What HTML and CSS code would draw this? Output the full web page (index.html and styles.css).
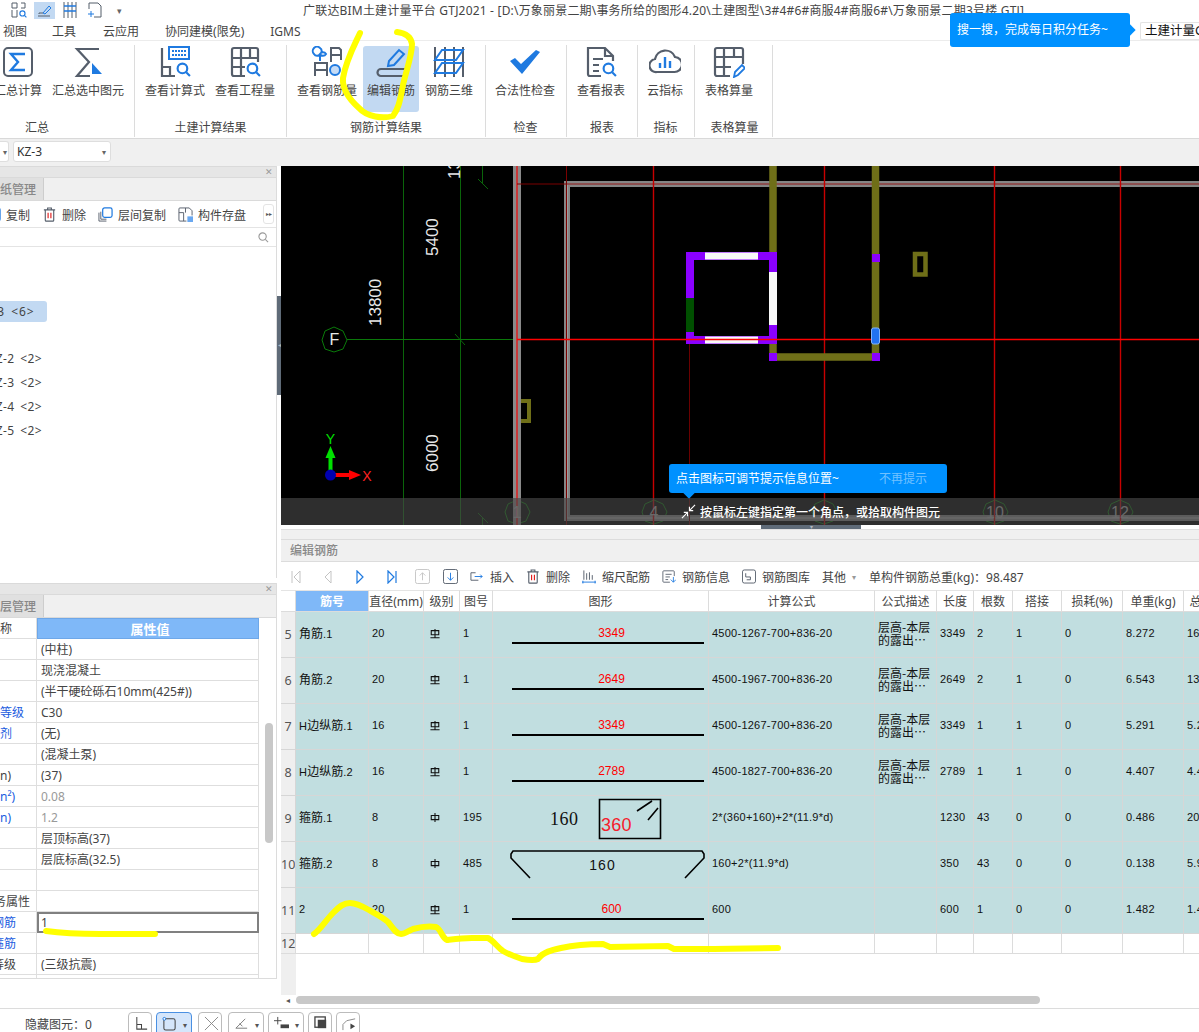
FILE: index.html
```html
<!DOCTYPE html>
<html lang="zh-CN">

<head>
    <meta charset="UTF-8">
    <title>广联达BIM土建计量平台 GTJ2021</title>
    <link rel="stylesheet" href="styles.css">
</head>

<body>
    <svg class="defs" width="0" height="0">
        <symbol id="grade-a" viewBox="0 0 12 12"><path d="M1.5 3.5h9v5h-9zM6 .5v11" fill="none" stroke="#111" stroke-width="1.3"/></symbol>
        <symbol id="grade-c" viewBox="0 0 12 12"><path d="M1.5 2.5h9v5h-9zM6 .5v10M.5 11h11" fill="none" stroke="#111" stroke-width="1.3"/></symbol>
        <symbol id="lens" viewBox="0 0 14 14"><circle cx="6" cy="6" r="4.5" fill="none" stroke="#1f7ae0" stroke-width="2"/><path d="M9.5 9.5l3.5 3.5" stroke="#1f7ae0" stroke-width="2"/></symbol>
        <symbol id="trash" viewBox="0 0 14 16"><path d="M1 3h12M5 3V1h4v2M2.5 3v11a1 1 0 0 0 1 1h7a1 1 0 0 0 1-1V3" fill="none" stroke="#555e6b" stroke-width="1.2"/><path d="M5.5 6v6M8.5 6v6" stroke="#e01818" stroke-width="1.2"/></symbol>
    </svg>

    <div class="titlebar">
        <div class="quick">
            <svg class="quick-icon q1" viewBox="0 0 16 16"><path d="M1 1h5v5H1zM1 8v7h5V8M10 1h4v5h-4" fill="none" stroke="#555e6b"/><use href="#lens" x="8" y="8" width="8" height="8"/></svg>
            <span class="quick-on"><svg class="quick-icon" viewBox="0 0 16 16"><path d="M1 14h12M2 12v-1h4" fill="none" stroke="#555e6b"/><path d="M6 11l6-7 2 2-6 6z" fill="none" stroke="#1f7ae0"/></svg></span>
            <svg class="quick-icon" viewBox="0 0 16 16"><path d="M2 0v16M14 0v16M6 0v16M10 0v16" stroke="#555e6b"/><path d="M2 4h12M2 9h12" stroke="#1f7ae0" stroke-width="1.4"/></svg>
            <svg class="quick-icon" viewBox="0 0 16 16"><path d="M2 7V1h9l3 3v11H7" fill="none" stroke="#555e6b"/><path d="M4 9v6M1 12h6" stroke="#1f7ae0"/></svg>
            <span class="quick-more">▾</span>
        </div>
        <div class="title">广联达BIM土建计量平台 GTJ2021 - [D:\万象丽景二期\事务所给的图形4.20\土建图型\3#4#6#商服4#商服6#\万象丽景二期3号楼.GTJ]</div>
    </div>

    <div class="menubar">
        <a class="m1">视图</a>
        <a class="m2">工具</a>
        <a class="m3">云应用</a>
        <a class="m4">协同建模(限免)</a>
        <a class="m5">IGMS</a>
        <div class="search-box">土建计量G</div>
    </div>

    <div class="ribbon">
        <div class="group g1">
            <div class="group-btns">
                <div class="rbtn">
                    <svg class="ricon" viewBox="0 0 32 32"><rect x="2" y="2" width="28" height="28" rx="4" fill="none" stroke="#555e6b" stroke-width="2"/><path d="M23 8H9l7 8-7 8h14" fill="none" stroke="#1f7ae0" stroke-width="2.4"/></svg>
                    <span>汇总计算</span>
                </div>
                <div class="rbtn">
                    <svg class="ricon" viewBox="0 0 32 32"><path d="M27 3H5l12 13L5 30h13" fill="none" stroke="#555e6b" stroke-width="2.2"/><path d="M20 17l10 11h-10z" fill="#1f7ae0"/></svg>
                    <span>汇总选中图元</span>
                </div>
            </div>
            <div class="group-name">汇总</div>
        </div>
        <div class="group g2">
            <div class="group-btns">
                <div class="rbtn">
                    <svg class="ricon" viewBox="0 0 32 32"><path d="M3 2v28h13M3 21h8v9" fill="none" stroke="#555e6b" stroke-width="2.2"/><path d="M10 1h20v12H10z" fill="none" stroke="#1f7ae0" stroke-width="2"/><path d="M13 5h14M13 9h14" stroke="#1f7ae0" stroke-width="2" stroke-dasharray="2 1"/><use href="#lens" x="17" y="16" width="15" height="15"/></svg>
                    <span>查看计算式</span>
                </div>
                <div class="rbtn">
                    <svg class="ricon" viewBox="0 0 32 32"><path d="M16 30H5a2 2 0 0 1-2-2V4a2 2 0 0 1 2-2h22a2 2 0 0 1 2 2v12M3 12h26M3 21h13M12 2v28M21 2v10" fill="none" stroke="#555e6b" stroke-width="2.2"/><use href="#lens" x="17" y="16" width="15" height="15"/></svg>
                    <span>查看工程量</span>
                </div>
            </div>
            <div class="group-name">土建计算结果</div>
        </div>
        <div class="group g3">
            <div class="group-btns">
                <div class="rbtn">
                    <svg class="ricon" viewBox="0 0 32 32"><path d="M4 30V17h12v13M4 24h12M20 16V2h8l2 2v10M20 9h10" fill="none" stroke="#555e6b" stroke-width="2"/><path d="M9 2a3.500 3.500 0 0 1 0 6 3.500 3.500 0 0 1-6 0 3.500 3.500 0 0 1 6-6zM9 8a3.500 3.500 0 0 1 6 0 3.500 3.500 0 0 1-6 0zM9 8v7" fill="none" stroke="#1f7ae0" stroke-width="2"/><circle cx="24" cy="24" r="5" fill="#c6dcf6" stroke="#1f7ae0" stroke-width="2"/></svg>
                    <span>查看钢筋量</span>
                </div>
                <div class="rbtn rbtn-on">
                    <svg class="ricon" viewBox="0 0 32 32"><path d="M30 23H6a3.500 3.500 0 0 0 0 7h22" fill="none" stroke="#555e6b" stroke-width="2.200"/><path d="M13 20l1-5L24 4l5 4-10 11z" fill="none" stroke="#1f7ae0" stroke-width="2"/></svg>
                    <span>编辑钢筋</span>
                </div>
                <div class="rbtn">
                    <svg class="ricon" viewBox="0 0 32 32"><path d="M2 1v30M12 1v30M21 1v30M30 1v30" stroke="#555e6b" stroke-width="2"/><path d="M9 4h21l-7 10H2zM9 17h21l-7 10H2z" fill="none" stroke="#1f7ae0" stroke-width="2"/></svg>
                    <span>钢筋三维</span>
                </div>
            </div>
            <div class="group-name">钢筋计算结果</div>
        </div>
        <div class="group g4">
            <div class="group-btns">
                <div class="rbtn">
                    <svg class="ricon" viewBox="0 0 32 32"><path d="M1 15l5-3 6 6L27 4l4 2-18 22z" fill="#1f7ae0"/></svg>
                    <span>合法性检查</span>
                </div>
            </div>
            <div class="group-name">检查</div>
        </div>
        <div class="group g5">
            <div class="group-btns">
                <div class="rbtn">
                    <svg class="ricon" viewBox="0 0 32 32"><path d="M16 30H5a2 2 0 0 1-2-2V2h17l8 8v5M20 2v8h8M8 13h10M8 19h6M8 25h6" fill="none" stroke="#555e6b" stroke-width="2.200"/><use href="#lens" x="17" y="16" width="15" height="15"/></svg>
                    <span>查看报表</span>
                </div>
            </div>
            <div class="group-name">报表</div>
        </div>
        <div class="group g6">
            <div class="group-btns">
                <div class="rbtn">
                    <svg class="ricon" viewBox="0 0 32 32"><path d="M8 26a6.500 6.500 0 0 1-2-13A10.500 10.500 0 0 1 26 11a7.500 7.500 0 0 1-1 15z" fill="none" stroke="#555e6b" stroke-width="2.200"/><path d="M11 17v5M16 11v11M21 15v7" stroke="#1f7ae0" stroke-width="2.400"/></svg>
                    <span>云指标</span>
                </div>
            </div>
            <div class="group-name">指标</div>
        </div>
        <div class="group g7">
            <div class="group-btns">
                <div class="rbtn">
                    <svg class="ricon" viewBox="0 0 32 32"><path d="M17 30H4a2 2 0 0 1-2-2V4a2 2 0 0 1 2-2h24a2 2 0 0 1 2 2v14M2 11h28M2 21h16M11 2v28M21 2v9" fill="none" stroke="#555e6b" stroke-width="2.200"/><path d="M21 31l1-5 7-7 3 3-7 7z" fill="none" stroke="#1f7ae0" stroke-width="1.800"/></svg>
                    <span>表格算量</span>
                </div>
            </div>
            <div class="group-name">表格算量</div>
        </div>
    </div>

    <div class="combobar">
        <div class="combo combo-cut"><i>▾</i></div>
        <div class="combo combo-kz">KZ-3<i>▾</i></div>
    </div>

    <div class="workspace">
        <div class="leftcol">
            <div class="panel panel-top">
                <div class="panel-head"><span class="close">✕</span></div>
                <div class="panel-tabs"><span class="tab">图纸管理</span></div>
                <div class="mini-toolbar">
                    <span class="mini mini-copy"><svg class="mini-icon" viewBox="0 0 14 14"><rect x="1" y="1" width="12" height="12" rx="2" fill="none" stroke="#1f7ae0" stroke-width="1.400"/></svg>复制</span>
                    <span class="mini"><svg class="mini-icon" viewBox="0 0 14 16"><use href="#trash"/></svg>删除</span>
                    <span class="mini"><svg class="mini-icon" viewBox="0 0 16 16"><path d="M1 6v9h8M3 5v8h6" fill="none" stroke="#555e6b"/><rect x="5" y="1" width="10" height="10" rx="2" fill="#fff" stroke="#1f7ae0" stroke-width="1.300"/></svg>层间复制</span>
                    <span class="mini"><svg class="mini-icon" viewBox="0 0 16 16"><path d="M9 15H2a1 1 0 0 1-1-1V2a1 1 0 0 1 1-1h10l3 3v5M1 6h5v9M8 1v5" fill="none" stroke="#555e6b"/><rect x="10" y="10" width="6" height="6" fill="#6aa8f0"/></svg>构件存盘</span>
                    <span class="mini-more">▸▸</span>
                </div>
                <div class="search-row"><svg class="search-icon" viewBox="0 0 12 12"><circle cx="5" cy="5" r="4" fill="none" stroke="#999" stroke-width="1.200"/><path d="M8 8l3 3" stroke="#999" stroke-width="1.200"/></svg></div>
                <div class="tree">
                    <div class="tree-item tree-on"><span>KZ-3 &lt;6&gt;</span></div>
                    <div class="tree-item tree-first"><span>KZ-2 &lt;2&gt;</span></div>
                    <div class="tree-item"><span>KZ-3 &lt;2&gt;</span></div>
                    <div class="tree-item"><span>KZ-4 &lt;2&gt;</span></div>
                    <div class="tree-item"><span>KZ-5 &lt;2&gt;</span></div>
                </div>
            </div>

            <div class="panel panel-bottom">
                <div class="panel-head"><span class="close">✕</span></div>
                <div class="panel-tabs"><span class="tab">楼层管理</span></div>
                <div class="prop-body">
                    <table class="prop-table">
                        <tr class="prop-head"><td class="prop-name">称</td><th>属性值</th></tr>
                        <tr><td class="prop-name"></td><td>(中柱)</td></tr>
                        <tr><td class="prop-name"></td><td>现浇混凝土</td></tr>
                        <tr><td class="prop-name"></td><td>(半干硬砼砾石10mm(425#))</td></tr>
                        <tr><td class="prop-name blue">等级</td><td>C30</td></tr>
                        <tr><td class="prop-name blue">剂</td><td>(无)</td></tr>
                        <tr><td class="prop-name"></td><td>(混凝土泵)</td></tr>
                        <tr><td class="prop-name">n)</td><td>(37)</td></tr>
                        <tr><td class="prop-name blue">n²)</td><td class="gray">0.08</td></tr>
                        <tr><td class="prop-name blue">n)</td><td class="gray">1.2</td></tr>
                        <tr><td class="prop-name"></td><td>层顶标高(37)</td></tr>
                        <tr><td class="prop-name"></td><td>层底标高(32.5)</td></tr>
                        <tr><td class="prop-name"></td><td></td></tr>
                        <tr><td class="prop-name"><span class="cut cut-wide">业务属性</span></td><td></td></tr>
                        <tr><td class="prop-name blue"><span class="cut">钢筋</span></td><td class="prop-sel">1</td></tr>
                        <tr><td class="prop-name blue"><span class="cut">箍筋</span></td><td></td></tr>
                        <tr><td class="prop-name"><span class="cut">等级</span></td><td>(三级抗震)</td></tr>
                        <tr><td class="prop-name"></td><td></td></tr>
                    </table>
                    <div class="prop-scroll"><div class="prop-thumb"></div></div>
                </div>
            </div>
        </div>

        <div class="splitter"><div class="split-handle">◂</div></div>

        <div class="rightcol">
            <div class="canvas">
                <svg class="cad" width="918" height="359" viewBox="281 166 918 359">
                    <!-- axis lines -->
                    <path d="M403.500 166V525M460.500 166V525" stroke="#0a640a"/>
                    <path d="M347 339.500H517" stroke="#0a780a"/>
                    <path d="M455 334l10 11M478 179l10 10M482.500 166v17M478 513l10 10M482.500 518v7" stroke="#0a640a" fill="none"/>
                    <g fill="none" stroke="#0a7a0a">
                        <polygon points="334,327 343,331 347,340 343,349 334,352 325,349 322,340 325,331"/>
                        <polygon points="517,500 526,504 530,512 526,521 517,524 508,521 505,512 508,504"/>
                        <polygon points="654,500 663,504 667,512 663,521 654,524 645,521 642,512 645,504"/>
                        <polygon points="824,500 833,504 837,512 833,521 824,524 815,521 812,512 815,504"/>
                        <polygon points="995,500 1004,504 1008,512 1004,521 995,524 986,521 983,512 986,504"/>
                        <polygon points="1120,500 1129,504 1133,512 1129,521 1120,524 1111,521 1108,512 1111,504"/>
                    </g>
                    <!-- walls -->
                    <rect x="513" y="166" width="8" height="359" fill="#8a8a8a"/>
                    <path d="M517 166V525" stroke="#c83838" stroke-width="2"/>
                    <rect x="567" y="184" width="700" height="334" fill="none" stroke="#858585" stroke-width="6"/>
                    <rect x="567" y="184" width="700" height="334" fill="none" stroke="#b5b5b5"/>
                    <path d="M517 184H1199M566.500 166V525" stroke="#7a0000"/>
                    <!-- red grid -->
                    <path d="M653.500 166V525M824.500 166V525M994.500 166V525M1120.500 166V525" stroke="#c80000" stroke-width="1.400"/>
                    <path d="M689.500 343V525" stroke="#6a0000"/>
                    <!-- olive beams -->
                    <path d="M773 166V357H875.500V166" fill="none" stroke="#6f6f18" stroke-width="7.500"/>
                    <path d="M521 401h8v20h-8" fill="none" stroke="#6f6f18" stroke-width="4"/>
                    <rect x="915" y="254" width="10.500" height="20.500" fill="none" stroke="#6f6f18" stroke-width="4.500"/>
                    <rect x="769" y="353" width="8" height="8" fill="#8a00ff"/>
                    <rect x="872" y="353" width="8" height="8" fill="#8a00ff"/>
                    <rect x="872" y="254" width="8" height="8" fill="#8a00ff"/>
                    <!-- column -->
                    <g fill="#8a00ff">
                        <rect x="686" y="252" width="91" height="8"/>
                        <rect x="686" y="336" width="91" height="8"/>
                        <rect x="686" y="252" width="8" height="92"/>
                        <rect x="769" y="252" width="8" height="92"/>
                    </g>
                    <rect x="705" y="252.500" width="53" height="7" fill="#f8f8f8"/>
                    <rect x="705" y="336.500" width="53" height="7" fill="#f8f8f8"/>
                    <rect x="769" y="272" width="8" height="53" fill="#f8f8f8"/>
                    <rect x="686" y="298" width="8" height="34" fill="#005000"/>
                    <path d="M517 339.500H1199" stroke="#ff0000" stroke-width="1.300"/>
                    <rect x="871.500" y="328" width="8" height="16" rx="2" fill="#2272f0" stroke="#86b4f8"/>
                    <!-- dims -->
                    <g class="dim">
                        <text transform="translate(381 326) rotate(-90)">13800</text>
                        <text transform="translate(438 256) rotate(-90)">5400</text>
                        <text transform="translate(438 472) rotate(-90)">6000</text>
                        <text transform="translate(460 179) rotate(-90)">13</text>
                    </g>
                    <text class="axis-name" x="334.500" y="345" text-anchor="middle">F</text>
                    <g class="axis-name axis-dim" text-anchor="middle">
                        <text x="517" y="518">1</text>
                        <text x="654" y="518">4</text>
                        <text x="995" y="518">10</text>
                        <text x="1120" y="518">12</text>
                    </g>
                    <!-- ucs -->
                    <path d="M330.500 475V458" stroke="#00e000" stroke-width="4"/>
                    <path d="M330.500 446l5 12h-10z" fill="#00e000"/>
                    <path d="M331 475h22" stroke="#ff0000" stroke-width="4"/>
                    <path d="M361 475l-12-5v10z" fill="#ff0000"/>
                    <circle cx="330.500" cy="475" r="5.500" fill="#0000b0"/>
                    <text class="ucs" x="330.500" y="444" fill="#00e000" text-anchor="middle">Y</text>
                    <text class="ucs" x="367" y="481" fill="#ff2020" text-anchor="middle">X</text>
                </svg>
                <div class="tip-blue">
                    <span>点击图标可调节提示信息位置~</span>
                    <span class="tip-off">不再提示</span>
                </div>
                <div class="hint-bar">
                    <svg class="hint-icon" viewBox="0 0 16 16"><path d="M9 7l6-6M9 3v4h4M7 9l-6 6M3 9h4v4" fill="none" stroke="#fff" stroke-width="1.200"/></svg>
                    <span>按鼠标左键指定第一个角点，或拾取构件图元</span>
                </div>
            </div>
            <div class="h-split"><div class="h-handle">▾</div></div>
            <div class="rebar-spacer"></div>
            <div class="rebar-title">编辑钢筋</div>
            <div class="rebar-toolbar">
                <svg class="nav nav1" viewBox="0 0 10 14"><path d="M1 1v12M9 1L3 7l6 6z" fill="none" stroke="#c4c4c4"/></svg>
                <svg class="nav nav2" viewBox="0 0 10 14"><path d="M8 1L2 7l6 6z" fill="none" stroke="#c4c4c4"/></svg>
                <svg class="nav nav2" viewBox="0 0 10 14"><path d="M2 1l6 6-6 6z" fill="none" stroke="#1f7ae0" stroke-width="1.200"/></svg>
                <svg class="nav nav2" viewBox="0 0 10 14"><path d="M9 1v12M1 1l6 6-6 6z" fill="none" stroke="#1f7ae0" stroke-width="1.200"/></svg>
                <svg class="box box1" viewBox="0 0 16 16"><rect x=".5" y=".5" width="15" height="15" rx="2" fill="none" stroke="#c4c4c4"/><path d="M8 12V4M5 7l3-3 3 3" fill="none" stroke="#c4c4c4"/></svg>
                <svg class="box" viewBox="0 0 16 16"><rect x=".5" y=".5" width="15" height="15" rx="2" fill="none" stroke="#555e6b"/><path d="M8 4v8M5 9l3 3 3-3" fill="none" stroke="#1f7ae0"/></svg>
                <span class="tool"><svg viewBox="0 0 15 14"><path d="M6 3H1v8h8M1 3" fill="none" stroke="#555e6b"/><path d="M5 7h8M11 5l2 2-2 2" fill="none" stroke="#1f7ae0"/></svg>插入</span>
                <span class="tool"><svg viewBox="0 0 14 16"><use href="#trash"/></svg>删除</span>
                <span class="tool"><svg viewBox="0 0 15 15"><path d="M2 1v10M5 4v7M8 3v8M11 6v5" stroke="#555e6b"/><path d="M0 13.500h15M1 12v3M14 12v3" fill="none" stroke="#1f7ae0"/></svg>缩尺配筋</span>
                <span class="tool"><svg viewBox="0 0 16 15"><path d="M14 7V2a1 1 0 0 0-1-1H2a1 1 0 0 0-1 1v11a1 1 0 0 0 1 1h7M4 5h7M4 8h5M4 11h3" fill="none" stroke="#555e6b"/><path d="M13 8v6M10 11l3 3 3-3" fill="none" stroke="#1f7ae0"/></svg>钢筋信息</span>
                <span class="tool"><svg viewBox="0 0 15 15"><rect x=".5" y=".5" width="14" height="14" rx="2" fill="none" stroke="#555e6b"/><path d="M4 4v4h5v3H5M9 8" fill="none" stroke="#555e6b"/></svg>钢筋图库</span>
                <span class="tool tool-other">其他<i>▾</i></span>
                <span class="tool tool-total">单构件钢筋总重(kg)：98.487</span>
            </div>
            <div class="rebar-table">
                <table>
                    <colgroup>
                        <col class="c-no"><col class="c-name"><col class="c-dia"><col class="c-grade"><col class="c-fig">
                        <col class="c-shape"><col class="c-formula"><col class="c-desc"><col class="c-len"><col class="c-count">
                        <col class="c-lap"><col class="c-loss"><col class="c-unit"><col class="c-total">
                    </colgroup>
                    <thead>
                        <tr>
                            <th></th><th class="th-on">筋号</th><th>直径(mm)</th><th>级别</th><th>图号</th><th>图形</th><th>计算公式</th>
                            <th>公式描述</th><th>长度</th><th>根数</th><th>搭接</th><th>损耗(%)</th><th>单重(kg)</th><th>总重(kg)</th>
                        </tr>
                    </thead>
                    <tbody>
                        <tr>
                            <td class="no">5</td><td><b>角筋</b>.1</td><td>20</td><td><svg class="grade"><use href="#grade-c"/></svg></td><td>1</td>
                            <td class="shape"><div class="bar">3349</div></td><td>4500-1267-700+836-20</td><td class="desc">层高-本层<br>的露出⋯</td>
                            <td>3349</td><td>2</td><td>1</td><td>0</td><td>8.272</td><td>16.544</td>
                        </tr>
                        <tr>
                            <td class="no">6</td><td><b>角筋</b>.2</td><td>20</td><td><svg class="grade"><use href="#grade-c"/></svg></td><td>1</td>
                            <td class="shape"><div class="bar">2649</div></td><td>4500-1967-700+836-20</td><td class="desc">层高-本层<br>的露出⋯</td>
                            <td>2649</td><td>2</td><td>1</td><td>0</td><td>6.543</td><td>13.086</td>
                        </tr>
                        <tr>
                            <td class="no">7</td><td>H<b>边纵筋</b>.1</td><td>16</td><td><svg class="grade"><use href="#grade-c"/></svg></td><td>1</td>
                            <td class="shape"><div class="bar">3349</div></td><td>4500-1267-700+836-20</td><td class="desc">层高-本层<br>的露出⋯</td>
                            <td>3349</td><td>1</td><td>1</td><td>0</td><td>5.291</td><td>5.291</td>
                        </tr>
                        <tr>
                            <td class="no">8</td><td>H<b>边纵筋</b>.2</td><td>16</td><td><svg class="grade"><use href="#grade-c"/></svg></td><td>1</td>
                            <td class="shape"><div class="bar">2789</div></td><td>4500-1827-700+836-20</td><td class="desc">层高-本层<br>的露出⋯</td>
                            <td>2789</td><td>1</td><td>1</td><td>0</td><td>4.407</td><td>4.407</td>
                        </tr>
                        <tr>
                            <td class="no">9</td><td><b>箍筋</b>.1</td><td>8</td><td><svg class="grade"><use href="#grade-a"/></svg></td><td>195</td>
                            <td class="shape">
                                <svg class="shape-svg" width="216" height="45" viewBox="493 796 216 45">
                                    <text class="s-big" x="550" y="825">160</text>
                                    <path d="M599.500 799.500h61v39h-61zM637 811l15-10M648 820l10-12" fill="none" stroke="#000" stroke-width="1.600"/>
                                    <text class="s-red" x="601" y="831">360</text>
                                </svg>
                            </td>
                            <td>2*(360+160)+2*(11.9*d)</td><td></td>
                            <td>1230</td><td>43</td><td>0</td><td>0</td><td>0.486</td><td>20.898</td>
                        </tr>
                        <tr>
                            <td class="no">10</td><td><b>箍筋</b>.2</td><td>8</td><td><svg class="grade"><use href="#grade-a"/></svg></td><td>485</td>
                            <td class="shape">
                                <svg class="shape-svg" width="216" height="45" viewBox="493 842 216 45">
                                    <path d="M530 878l-19-20v-4l2-3h189l2 3v4l-19 20" fill="none" stroke="#000" stroke-width="1.600"/>
                                    <text class="s-mid" x="602.500" y="870" text-anchor="middle">160</text>
                                </svg>
                            </td>
                            <td>160+2*(11.9*d)</td><td></td>
                            <td>350</td><td>43</td><td>0</td><td>0</td><td>0.138</td><td>5.934</td>
                        </tr>
                        <tr>
                            <td class="no">11</td><td>2</td><td>20</td><td><svg class="grade"><use href="#grade-c"/></svg></td><td>1</td>
                            <td class="shape"><div class="bar">600</div></td><td>600</td><td></td>
                            <td>600</td><td>1</td><td>0</td><td>0</td><td>1.482</td><td>1.482</td>
                        </tr>
                        <tr class="row-new">
                            <td class="no">12</td><td></td><td></td><td></td><td></td><td></td><td></td><td></td><td></td><td></td><td></td><td></td><td></td><td></td>
                        </tr>
                    </tbody>
                </table>
            </div>
            <div class="hscroll"><span class="h-left">◂</span><div class="h-thumb"></div></div>
        </div>
    </div>

    <div class="statusbar">
        <span class="status-text">隐藏图元：0</span>
        <span class="sbtn s-w1"><svg viewBox="0 0 16 16"><path d="M3 1v13h11M3 9h5v5" fill="none" stroke="#444" stroke-width="1.100"/></svg></span>
        <span class="sbtn s-w2 sbtn-on"><svg viewBox="0 0 16 16"><rect x="2" y="3" width="12" height="12" rx="2" fill="none" stroke="#444" stroke-width="1.100"/><circle cx="2.500" cy="3" r="1.500" fill="#fff" stroke="#1f7ae0"/></svg><i>▾</i></span>
        <span class="sbtn s-w1 s-gap"><svg viewBox="0 0 16 16"><path d="M1 1l14 14M15 1L1 15" stroke="#888"/></svg></span>
        <span class="sbtn s-w2 s-gap"><svg viewBox="0 0 16 16"><path d="M2 13L12 3M2 13h12M6 8l3 3" fill="none" stroke="#777"/></svg><i>▾</i></span>
        <span class="sbtn s-w2"><svg viewBox="0 0 16 16"><path d="M4 1v8M0 5h8" stroke="#444"/><rect x="7" y="9" width="9" height="4" fill="#444"/></svg><i>▾</i></span>
        <span class="sbtn s-w1"><svg viewBox="0 0 16 16"><rect x="1" y="1" width="11" height="11" fill="none" stroke="#444" stroke-width="1.400"/><rect x="4" y="4" width="9" height="9" fill="#444"/></svg></span>
        <span class="sbtn s-w1"><svg viewBox="0 0 16 16"><path d="M1 15V9l4-4 9-2" fill="none" stroke="#888"/><path d="M9 8l5 3-5 3z" fill="#444"/></svg></span>
    </div>

    <div class="tip-search">搜一搜，完成每日积分任务~</div>

    <!-- yellow marker drawn over the screenshot -->
    <svg class="marker" width="1199" height="1032" viewBox="0 0 1199 1032">
        <path d="M360 33C354 46 346 60 343 78C342 90 350 100 359 108C367 117 383 119 393 116C399 108 400 100 403 85C407 68 412 55 412 44C411 37 405 33 397 32" />
        <path d="M46 931C60 933 80 934 100 934L155 934" />
        <path d="M314 934C320 930 326 920 333 913C340 906 344 903 350 903C356 903 362 906 369 910C378 915 384 918 388 922C393 928 396 934 401 934C405 934 408 931 413 929C420 927 430 926 436 927C441 929 442 938 447 940C455 939 462 938 472 938L488 938C494 941 497 947 503 951C510 955 516 957 522 959C528 960 534 961 538 959C543 952 552 950 561 948C570 946 585 944 603 944L610 947L668 946L674 949L714 949L778 948" />
    </svg>
</body>

</html>
```

FILE: styles.css
```css
html, body {
    margin: 0;
    padding: 0;
}

body {
    position: relative;
    width: 1199px;
    height: 1032px;
    overflow: hidden;
    background: #fff;
    font-family: 'Noto Sans', 'Noto Sans CJK SC', sans-serif;
    font-size: 12px;
    color: #444;
}

.defs {
    position: absolute;
}

/* title bar */
.titlebar {
    display: flex;
    height: 20px;
    overflow: hidden;
}

.quick {
    display: flex;
    align-items: center;
    width: 303px;
    flex: none;
    padding-left: 11px;
    box-sizing: border-box;
}

.quick-icon {
    width: 16px;
    height: 16px;
    display: block;
}

.quick-on {
    width: 21px;
    height: 17px;
    margin: 0 7px;
    background: #c2d9f2;
    display: flex;
    justify-content: center;
}

.quick > svg:nth-child(3) {
    margin-right: 9px;
}

.quick-more {
    margin-left: 14px;
    font-size: 9px;
    color: #666;
}

.title {
    white-space: nowrap;
    line-height: 21px;
    letter-spacing: 0.19px;
    color: #444;
}

/* menu */
.menubar {
    display: flex;
    align-items: center;
    height: 20px;
    padding-top: 2px;
    box-sizing: border-box;
}

.menubar a {
    white-space: nowrap;
    color: #444;
}

.m1 { margin-left: 3px; }
.m2 { margin-left: 25px; }
.m3 { margin-left: 27px; }
.m4 { margin-left: 26px; }
.m5 { margin-left: 26px; }

.search-box {
    margin-left: auto;
    width: 59px;
    height: 18px;
    line-height: 16px;
    padding-left: 4px;
    box-sizing: border-box;
    border: 1px solid #e4e4e4;
    border-right: 0;
    border-radius: 2px 0 0 2px;
    font-size: 12.5px;
    color: #111;
    white-space: nowrap;
    overflow: hidden;
}

.tip-search {
    position: absolute;
    left: 950px;
    top: 13px;
    width: 180px;
    height: 34px;
    line-height: 34px;
    padding-left: 7px;
    box-sizing: border-box;
    background: #0091ff;
    color: #fff;
    border-radius: 3px;
}

.tip-search::after {
    content: "";
    position: absolute;
    right: -4px;
    top: 13px;
    width: 8px;
    height: 8px;
    background: #0091ff;
    transform: rotate(45deg);
}

/* ribbon */
.ribbon {
    display: flex;
    height: 99px;
    box-sizing: border-box;
    padding-top: 4px;
    margin-left: -16px;
    border-top: 1px solid #ececec;
    border-bottom: 1px solid #d9d9d9;
}

.group {
    height: 92px;
    padding: 0 5px;
    box-sizing: border-box;
    flex: none;
    border-right: 1px solid #dcdcdc;
}

.g1 { width: 151px; }
.g2 { width: 152px; }
.g3 { width: 199px; }
.g4 { width: 81px; padding-left: 4px; }
.g5 { width: 71px; }
.g6 { width: 57px; padding-left: 4px; }
.g7 { width: 78px; }

.group-btns {
    display: flex;
    height: 73px;
    padding-top: 1px;
    box-sizing: border-box;
}

.rbtn {
    display: flex;
    flex-direction: column;
    align-items: center;
    height: 66px;
    padding: 0 5px;
    border-radius: 3px;
    white-space: nowrap;
    color: #444;
}

.rbtn-on {
    padding: 0 4px;
    margin: 0 1px;
    background: #c2d9f2;
}

.ricon {
    width: 32px;
    height: 32px;
    margin-bottom: 4px;
}

.rbtn span {
    line-height: 18px;
}

.group-name {
    height: 19px;
    line-height: 19px;
    text-align: center;
    color: #444;
}

.g1 .group-name {
    padding-right: 44px;
}

.g7 .group-name {
    padding-left: 2px;
}

/* combo row */
.combobar {
    display: flex;
    align-items: center;
    gap: 4px;
    height: 27px;
    background: #f0f0f0;
    padding-bottom: 2px;
    box-sizing: border-box;
}

.combo {
    position: relative;
    height: 21px;
    line-height: 19px;
    background: #fff;
    border: 1px solid #dedede;
    border-radius: 3px;
    box-sizing: border-box;
    color: #333;
}

.combo i {
    position: absolute;
    right: 4px;
    top: 0;
    font-style: normal;
    font-size: 8px;
    color: #666;
}

.combo-cut {
    width: 9px;
    border-left: 0;
    border-radius: 0 3px 3px 0;
}

.combo-cut i {
    right: 1px;
}

.combo-kz {
    width: 98px;
    padding-left: 3px;
}

/* workspace */
.workspace {
    display: grid;
    grid-template-columns: 277px 4px 918px;
    height: 842px;
}

.leftcol {
    display: flex;
    flex-direction: column;
    gap: 5px;
}

.panel {
    display: flex;
    flex-direction: column;
    overflow: hidden;
    border-right: 1px solid #dcdcdc;
    box-sizing: border-box;
    width: 277px;
}

.panel-top {
    height: 412px;
}

.panel-bottom {
    height: 396px;
    border-bottom: 1px solid #dcdcdc;
}

.panel-head {
    flex: none;
    height: 12px;
    box-sizing: border-box;
    background: #e6e6e6;
    border-top: 1px solid #dadada;
    border-bottom: 1px solid #dadada;
    position: relative;
}

.close {
    position: absolute;
    right: 3px;
    top: -1px;
    font-size: 9px;
    line-height: 12px;
    color: #999;
}

.panel-tabs {
    flex: none;
    height: 23px;
    box-sizing: border-box;
    background: #f0f0f0;
    border-bottom: 1px solid #dadada;
}

.tab {
    display: block;
    width: 44px;
    height: 22px;
    line-height: 23px;
    overflow: hidden;
    background: #e0e0e0;
    border-right: 1px solid #cdcdcd;
    box-sizing: border-box;
    color: #888;
    font-weight: 500;
    white-space: nowrap;
    text-indent: -12px;
}

.mini-toolbar {
    flex: none;
    display: flex;
    align-items: center;
    height: 27px;
    padding-top: 1px;
    box-sizing: border-box;
    gap: 12px;
    margin-left: -14px;
    position: relative;
    border-bottom: 1px solid #e4e4e4;
    color: #444;
}

.mini {
    display: flex;
    align-items: center;
    gap: 5px;
    white-space: nowrap;
}

.mini-icon {
    width: 15px;
    height: 15px;
}

.mini-more {
    position: absolute;
    right: 2px;
    top: 3px;
    width: 11px;
    height: 20px;
    line-height: 18px;
    text-align: center;
    border: 1px solid #e4e4e4;
    border-radius: 3px;
    box-sizing: border-box;
    font-size: 6px;
    color: #555;
}

.search-row {
    flex: none;
    display: flex;
    align-items: center;
    justify-content: flex-end;
    height: 19px;
    box-sizing: border-box;
    padding-right: 7px;
    border-bottom: 1px solid #e4e4e4;
}

.search-icon {
    width: 11px;
    height: 11px;
}

.tree {
    padding-top: 54px;
}

.tree-item {
    height: 24px;
    line-height: 24px;
    white-space: nowrap;
    color: #444;
    letter-spacing: 0.4px;
    word-spacing: 2px;
}

.tree-item span {
    display: block;
    margin-left: -12px;
}

.tree-on {
    width: 47px;
    height: 21px;
    line-height: 21px;
    overflow: hidden;
    background: #c2d9f2;
    border-radius: 0 3px 3px 0;
    letter-spacing: 1px;
}

.tree-on span {
    margin-left: -24px;
}

.tree-first {
    margin-top: 25px;
}

/* property table */
.prop-body {
    display: flex;
}

.prop-table {
    width: 259px;
    table-layout: fixed;
    border-collapse: separate;
    border-spacing: 0;
    flex: none;
}

.prop-table td,
.prop-table th {
    height: 21px;
    box-sizing: border-box;
    padding: 0 0 0 4px;
    border-bottom: 1px solid #dedede;
    border-right: 1px solid #dedede;
    white-space: nowrap;
    overflow: hidden;
    color: #444;
}

.prop-table th {
    background: #7fb8f8;
    color: #fff;
    font-weight: 600;
    font-size: 13px;
    border: 1px solid #6ea7e8;
    text-align: center;
}

.prop-table .prop-name {
    width: 37px;
    padding: 0;
    border-right-color: #dedede;
}

.prop-table .blue {
    color: #1b5ce0;
}

.prop-table .gray {
    color: #999;
}

.cut {
    display: block;
    margin-left: -8px;
    white-space: nowrap;
}

.cut-wide {
    margin-left: -18px;
}

.prop-table .prop-sel {
    outline: 2px solid #808080;
    outline-offset: -2px;
}

.prop-scroll {
    flex: none;
    width: 17px;
    padding: 105px 0 0 6px;
    box-sizing: border-box;
}

.prop-thumb {
    width: 8px;
    height: 120px;
    border-radius: 4px;
    background: #c8c8c8;
}

/* splitter */
.splitter {
    padding-top: 130px;
}

.split-handle {
    height: 99px;
    line-height: 99px;
    background: #5f6b78;
    color: #aeb6be;
    font-size: 6px;
    text-align: center;
    overflow: hidden;
}

/* cad canvas */
.rightcol {
    display: flex;
    flex-direction: column;
    overflow: hidden;
}

.canvas {
    position: relative;
    flex: none;
    height: 359px;
    background: #000;
    overflow: hidden;
}

.cad {
    display: block;
}

.dim text {
    font: 17px 'Liberation Sans', sans-serif;
    fill: #e8e8e8;
}

.axis-name {
    font: 16px 'Liberation Sans', sans-serif;
    fill: #e8e8e8;
}

.axis-dim {
    fill: #a8a8a8;
}

.ucs {
    font: 14px 'Liberation Sans', sans-serif;
}

.tip-blue {
    position: absolute;
    left: 388px;
    top: 298px;
    display: flex;
    justify-content: space-between;
    width: 278px;
    height: 29px;
    line-height: 29px;
    padding: 0 20px 0 7px;
    box-sizing: border-box;
    background: #0091ff;
    border-radius: 3px;
    color: #fff;
}

.tip-blue::after {
    content: "";
    position: absolute;
    left: 16px;
    bottom: -4px;
    width: 8px;
    height: 8px;
    background: #0091ff;
    transform: rotate(45deg);
}

.tip-off {
    color: rgba(255, 255, 255, 0.45);
}

.hint-bar {
    position: absolute;
    left: 0;
    right: 0;
    bottom: 0;
    height: 27px;
    display: flex;
    align-items: center;
    padding-left: 400px;
    gap: 4px;
    background: rgba(70, 70, 70, 0.65);
    color: #fff;
    font-weight: 500;
}

.hint-icon {
    width: 15px;
    height: 15px;
}

.h-split {
    flex: none;
    height: 4px;
    background: #fff;
}

.h-handle {
    width: 100px;
    height: 4px;
    line-height: 4px;
    background: #5f6b78;
    color: #aeb6be;
    font-size: 6px;
    text-align: center;
    overflow: hidden;
    margin-left: 480px;
}

.rebar-spacer {
    flex: none;
    height: 11px;
    background: #f0f0f0;
    border-top: 1px solid #e0e0e0;
    border-bottom: 1px solid #dcdcdc;
    box-sizing: border-box;
}

.rebar-title {
    flex: none;
    height: 22px;
    line-height: 22px;
    box-sizing: border-box;
    padding-left: 9px;
    background: #f0f0f0;
    border-bottom: 1px solid #dcdcdc;
    color: #888;
    font-weight: 500;
}

/* rebar toolbar */
.rebar-toolbar {
    flex: none;
    display: flex;
    align-items: center;
    height: 28px;
    box-sizing: border-box;
    padding: 1px 0 0 10px;
    color: #444;
    white-space: nowrap;
}

.nav {
    width: 10px;
    height: 14px;
    flex: none;
}

.nav2 {
    margin-left: 22px;
}

.box {
    width: 15px;
    height: 15px;
    flex: none;
    margin-left: 13px;
}

.box1 {
    margin-left: 18px;
}

.tool {
    display: flex;
    align-items: center;
    gap: 6px;
    margin-left: 12px;
}

.tool svg {
    width: 14px;
    height: 15px;
}

.tool-other {
    gap: 0;
}

.tool-other i {
    font-style: normal;
    font-size: 8px;
    color: #999;
    margin-left: 6px;
}

.tool-total {
    margin-left: 13px;
}

/* rebar grid */
.rebar-table {
    flex: none;
    height: 405px;
    overflow: hidden;
    background: linear-gradient(#efefef, #efefef) no-repeat left top / 15px 100%;
}

.rebar-table table {
    width: 960px;
    table-layout: fixed;
    border-collapse: separate;
    border-spacing: 0;
    font-family: 'Liberation Sans', sans-serif;
    font-size: 11px;
    letter-spacing: 0.25px;
    color: #111;
}

.c-no { width: 15px; }
.c-name { width: 73px; }
.c-dia { width: 55px; }
.c-grade { width: 36px; }
.c-fig { width: 33px; }
.c-shape { width: 216px; }
.c-formula { width: 166px; }
.c-desc { width: 62px; }
.c-len { width: 37px; }
.c-count { width: 39px; }
.c-lap { width: 49px; }
.c-loss { width: 61px; }
.c-unit { width: 61px; }
.c-total { width: 57px; }

.rebar-table th {
    height: 22px;
    box-sizing: border-box;
    padding: 0;
    background: #fff;
    border-top: 1px solid #e4e4e4;
    border-right: 1px solid #dcdcdc;
    border-bottom: 1px solid #dcdcdc;
    font-family: 'Noto Sans', 'Noto Sans CJK SC', sans-serif;
    font-size: 12px;
    letter-spacing: 0;
    font-weight: 400;
    color: #444;
    white-space: nowrap;
    overflow: hidden;
}

.rebar-table th.th-on {
    background: #7fb8f8;
    color: #fff;
    font-weight: 600;
}

.rebar-table td {
    height: 46px;
    padding: 0 0 4px 3px;
    box-sizing: border-box;
    background: #c1dee0;
    border-right: 1px solid #d6d6d6;
    border-bottom: 1px solid #d6d6d6;
    white-space: nowrap;
    overflow: hidden;
}

.rebar-table td b {
    font-family: 'Noto Sans CJK SC', sans-serif;
    font-size: 12px;
    font-weight: 400;
    letter-spacing: 0;
}

.rebar-table td.no {
    background: #efefef;
    padding: 0;
    text-align: center;
    font-family: 'Noto Sans', sans-serif;
    font-size: 12.5px;
    letter-spacing: 0;
    color: #555;
}

.rebar-table td.desc {
    font-family: 'Noto Sans CJK SC', sans-serif;
    font-size: 12px;
    line-height: 13px;
    letter-spacing: 0;
}

.rebar-table td.shape {
    padding: 0;
    vertical-align: top;
}

.bar {
    margin: 12px 4px 0 19px;
    height: 18px;
    line-height: 18px;
    padding-left: 7px;
    border-bottom: 2px solid #000;
    color: #f00;
    font-size: 12px;
    letter-spacing: 0;
    text-align: center;
}

.shape-svg {
    display: block;
}

.s-big {
    font: 18px 'Liberation Serif', serif;
    letter-spacing: 0.5px;
    fill: #111;
}

.s-red {
    font: 18px 'Liberation Sans', sans-serif;
    fill: #f5202c;
}

.s-mid {
    font: 14px 'Liberation Sans', sans-serif;
    letter-spacing: 1px;
    fill: #111;
}

.grade {
    width: 10px;
    height: 11px;
    margin-left: 3px;
    vertical-align: -2px;
}

.rebar-table .row-new td {
    height: 20px;
    padding: 0;
    background: #fff;
    border-color: #dcdcdc;
}

.rebar-table .row-new td.no {
    background: #efefef;
}

.hscroll {
    flex: none;
    display: flex;
    align-items: center;
    height: 11px;
    padding-left: 5px;
    border-bottom: 1px solid #fff;
    box-sizing: border-box;
}

.h-left {
    width: 10px;
    font-size: 8px;
    color: #555;
    line-height: 8px;
}

.h-thumb {
    width: 744px;
    height: 8px;
    border-radius: 4px;
    background: #c8c8c8;
}

/* status */
.statusbar {
    display: flex;
    align-items: flex-start;
    height: 24px;
    overflow: hidden;
    border-top: 1px solid #dcdcdc;
    box-sizing: border-box;
    gap: 4px;
}

.status-text {
    width: 124px;
    padding: 6px 0 0 25px;
    box-sizing: border-box;
    white-space: nowrap;
    color: #444;
}

.sbtn {
    display: flex;
    flex: none;
    height: 30px;
    margin-top: 3px;
    padding: 3px 0 0 5px;
    box-sizing: border-box;
    border: 1px solid #bcbcbc;
    border-radius: 4px;
    align-items: flex-start;
}

.sbtn svg {
    width: 15px;
    height: 15px;
    flex: none;
}

.sbtn i {
    font-style: normal;
    font-size: 8px;
    margin: 3px 0 0 6px;
    color: #555;
}

.s-w1 { width: 24px; }
.s-w2 { width: 36px; }

.s-gap {
    margin-left: 2px;
}

.sbtn-on {
    background: #d5e6fb;
    border-color: #4a90e2;
}

/* marker scribbles */
.marker {
    position: absolute;
    left: 0;
    top: 0;
    pointer-events: none;
}

.marker path {
    fill: none;
    stroke: #ffff00;
    stroke-width: 6;
    stroke-linecap: round;
    stroke-linejoin: round;
}
```
